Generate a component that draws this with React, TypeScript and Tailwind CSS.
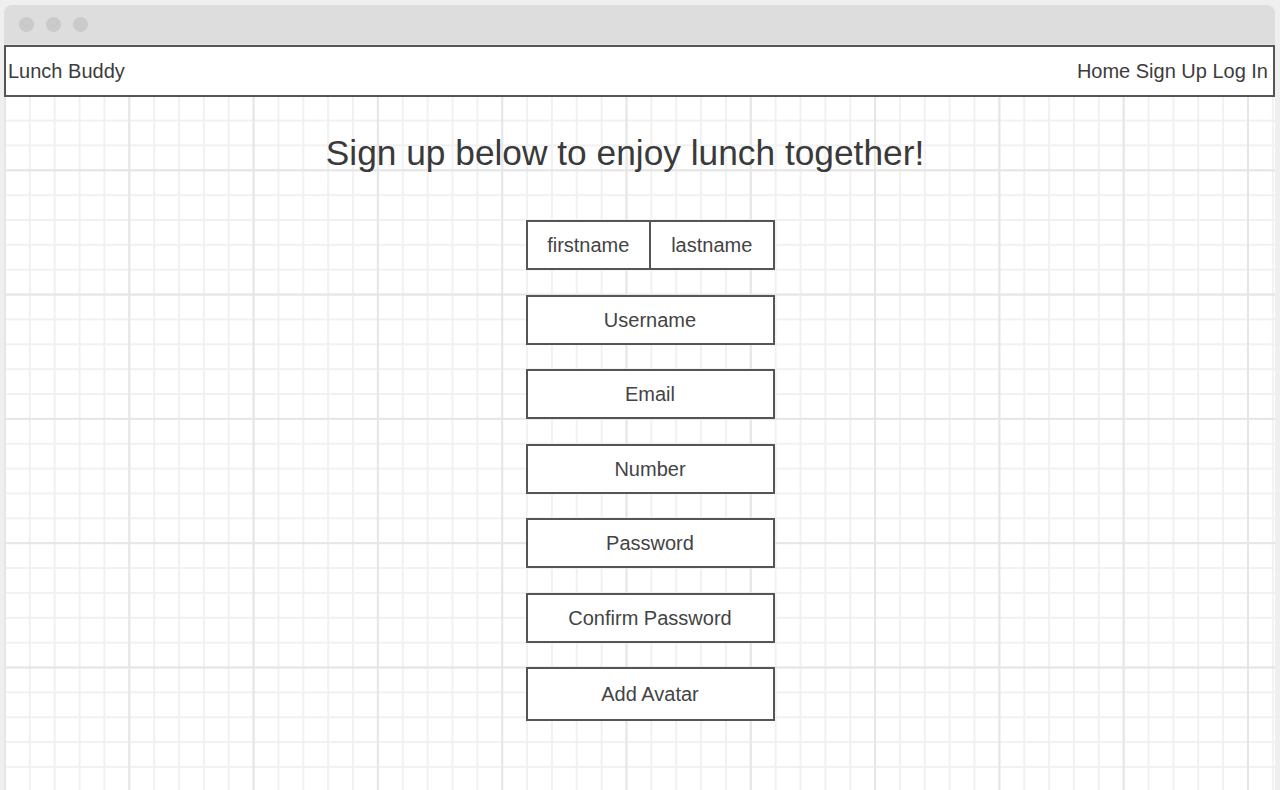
import React from "react";

const fields = ["Username", "Email", "Number", "Password", "Confirm Password"];

export default function App() {
  return (
    <div
      className="h-[790px] w-[1280px] overflow-hidden bg-[#efefef] pt-[5px] pl-[4px] pr-[5px] text-[#404040]"
      style={{ fontFamily: '"Liberation Sans", Arial, sans-serif' }}
    >
      <div className="flex h-full flex-col overflow-hidden rounded-t-[8px]">
        {/* title bar */}
        <div className="flex h-[40px] shrink-0 items-center gap-[12px] border-b border-[#e6e6e6] bg-[#dddddd] pl-[15px] pb-[1px]">
          <span className="h-[15px] w-[15px] rounded-full bg-[#cacaca]" />
          <span className="h-[15px] w-[15px] rounded-full bg-[#cacaca]" />
          <span className="h-[15px] w-[15px] rounded-full bg-[#cacaca]" />
        </div>
        {/* page */}
        <div className="flex flex-1 flex-col bg-white bg-[linear-gradient(to_right,#e6e6e6_2px,transparent_2px),linear-gradient(to_bottom,#e6e6e6_2px,transparent_2px),linear-gradient(to_right,#f1f1f1_2px,transparent_2px),linear-gradient(to_bottom,#f1f1f1_2px,transparent_2px)] bg-[size:124.3px_124.3px,124.3px_124.3px,24.86px_24.86px,24.86px_24.86px] bg-[position:0px_0px]">
          <nav className="flex h-[52px] shrink-0 items-center justify-between border-2 border-[#555555] bg-white pl-[2px] pr-[5px] pb-[1px] text-[20px] text-[#3c3c3c]">
            <span>Lunch Buddy</span>
            <div className="flex gap-[5.5px]">
              <span>Home</span>
              <span>Sign Up</span>
              <span>Log In</span>
            </div>
          </nav>
          <div className="mt-[36px] flex justify-center pr-[29px]">
            <h1 className="text-[35.3px] leading-[40px] text-[#3a3a3a]">
              Sign up below to enjoy lunch together!
            </h1>
          </div>
          <div className="mt-[47px] flex flex-col items-center gap-[24.5px] pl-[21px] text-[20px] text-[#444444]">
            <div className="flex h-[50px] w-[249px] border-2 border-[#555555] bg-white">
              <div className="flex flex-1 items-center justify-center border-r-2 border-[#555555]">
                firstname
              </div>
              <div className="flex flex-1 items-center justify-center">lastname</div>
            </div>
            {fields.map((f) => (
              <div
                key={f}
                className="flex h-[50px] w-[249px] items-center justify-center border-2 border-[#555555] bg-white"
              >
                {f}
              </div>
            ))}
            <div className="flex h-[54px] w-[249px] items-center justify-center border-2 border-[#555555] bg-white">
              Add Avatar
            </div>
          </div>
        </div>
      </div>
    </div>
  );
}
